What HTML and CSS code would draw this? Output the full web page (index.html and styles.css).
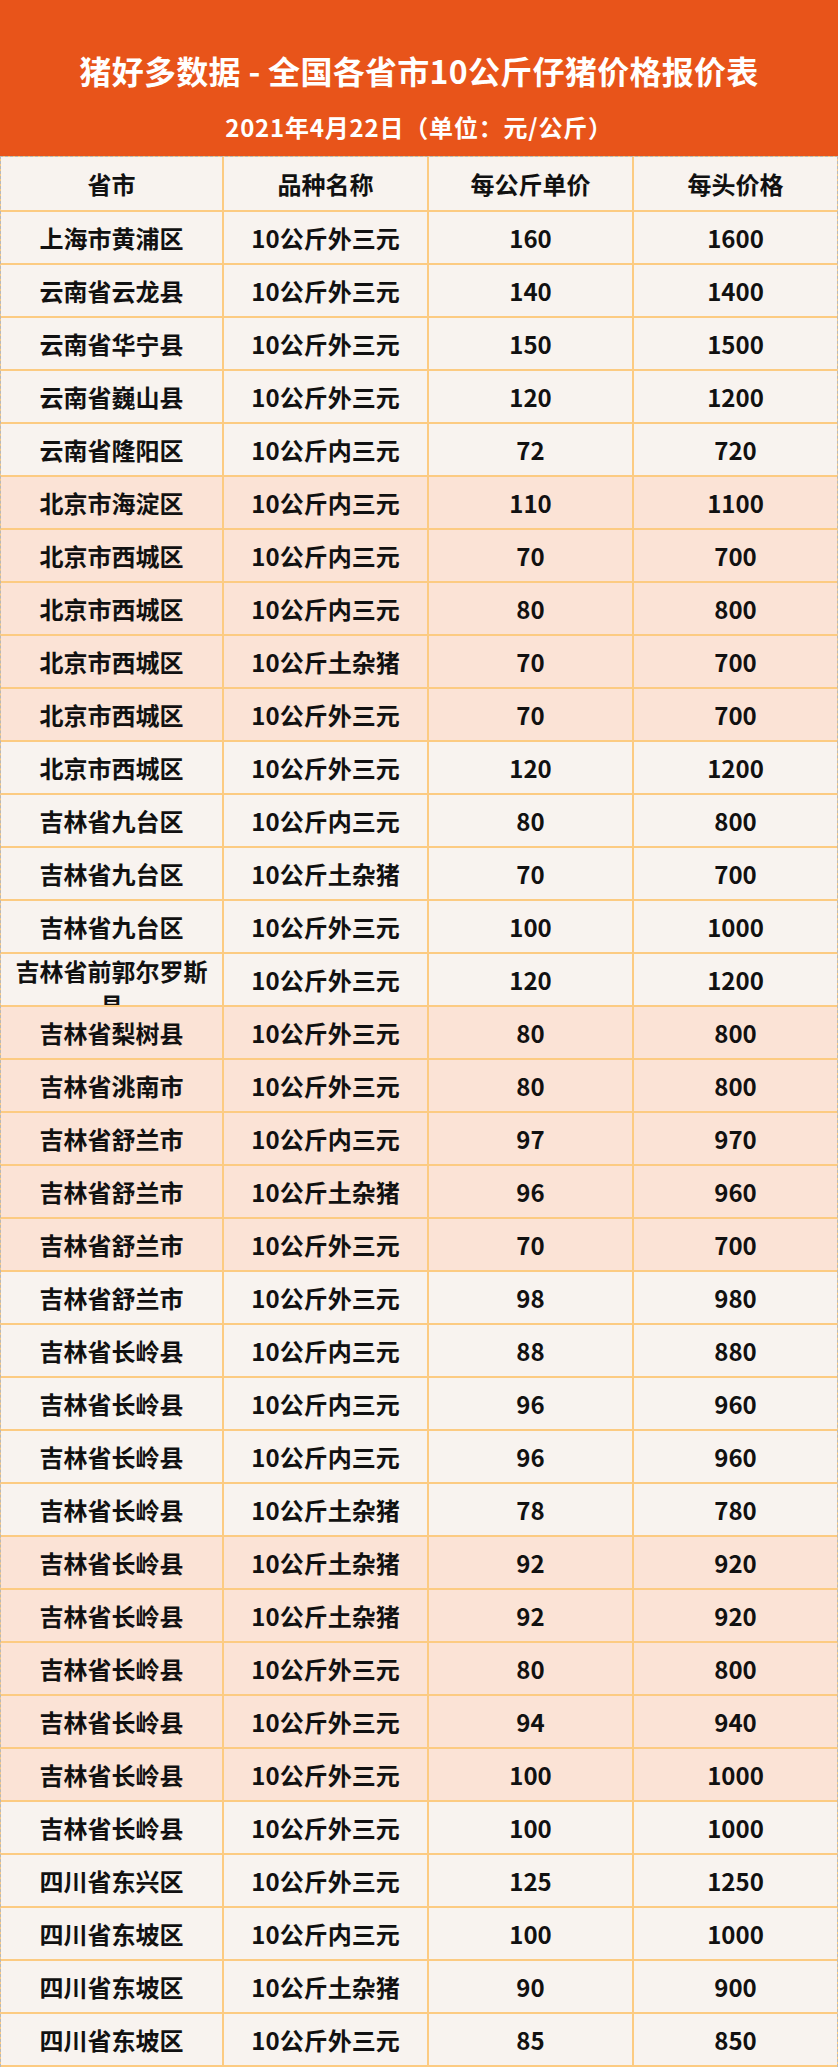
FILE: index.html
```html
<!DOCTYPE html>
<html lang="zh-CN">
<head>
<meta charset="utf-8">
<title>猪好多数据 - 全国各省市10公斤仔猪价格报价表</title>
<link rel="stylesheet" href="styles.css">
</head>
<body>
<div class="page">
  <header class="banner">
    <div class="title">猪好多数据 - 全国各省市10公斤仔猪价格报价表</div>
    <div class="date">2021年4月22日（单位：元/公斤）</div>
  </header>
  <div class="table">
    <div class="row head"><div>省市</div><div>品种名称</div><div>每公斤单价</div><div>每头价格</div></div>
    <div class="row light"><div>上海市黄浦区</div><div>10公斤外三元</div><div>160</div><div>1600</div></div>
    <div class="row light"><div>云南省云龙县</div><div>10公斤外三元</div><div>140</div><div>1400</div></div>
    <div class="row light"><div>云南省华宁县</div><div>10公斤外三元</div><div>150</div><div>1500</div></div>
    <div class="row light"><div>云南省巍山县</div><div>10公斤外三元</div><div>120</div><div>1200</div></div>
    <div class="row light"><div>云南省隆阳区</div><div>10公斤内三元</div><div>72</div><div>720</div></div>
    <div class="row pink"><div>北京市海淀区</div><div>10公斤内三元</div><div>110</div><div>1100</div></div>
    <div class="row pink"><div>北京市西城区</div><div>10公斤内三元</div><div>70</div><div>700</div></div>
    <div class="row pink"><div>北京市西城区</div><div>10公斤内三元</div><div>80</div><div>800</div></div>
    <div class="row pink"><div>北京市西城区</div><div>10公斤土杂猪</div><div>70</div><div>700</div></div>
    <div class="row pink"><div>北京市西城区</div><div>10公斤外三元</div><div>70</div><div>700</div></div>
    <div class="row light"><div>北京市西城区</div><div>10公斤外三元</div><div>120</div><div>1200</div></div>
    <div class="row light"><div>吉林省九台区</div><div>10公斤内三元</div><div>80</div><div>800</div></div>
    <div class="row light"><div>吉林省九台区</div><div>10公斤土杂猪</div><div>70</div><div>700</div></div>
    <div class="row light"><div>吉林省九台区</div><div>10公斤外三元</div><div>100</div><div>1000</div></div>
    <div class="row light"><div class="wrap">吉林省前郭尔罗斯县</div><div>10公斤外三元</div><div>120</div><div>1200</div></div>
    <div class="row pink"><div>吉林省梨树县</div><div>10公斤外三元</div><div>80</div><div>800</div></div>
    <div class="row pink"><div>吉林省洮南市</div><div>10公斤外三元</div><div>80</div><div>800</div></div>
    <div class="row pink"><div>吉林省舒兰市</div><div>10公斤内三元</div><div>97</div><div>970</div></div>
    <div class="row pink"><div>吉林省舒兰市</div><div>10公斤土杂猪</div><div>96</div><div>960</div></div>
    <div class="row pink"><div>吉林省舒兰市</div><div>10公斤外三元</div><div>70</div><div>700</div></div>
    <div class="row light"><div>吉林省舒兰市</div><div>10公斤外三元</div><div>98</div><div>980</div></div>
    <div class="row light"><div>吉林省长岭县</div><div>10公斤内三元</div><div>88</div><div>880</div></div>
    <div class="row light"><div>吉林省长岭县</div><div>10公斤内三元</div><div>96</div><div>960</div></div>
    <div class="row light"><div>吉林省长岭县</div><div>10公斤内三元</div><div>96</div><div>960</div></div>
    <div class="row light"><div>吉林省长岭县</div><div>10公斤土杂猪</div><div>78</div><div>780</div></div>
    <div class="row pink"><div>吉林省长岭县</div><div>10公斤土杂猪</div><div>92</div><div>920</div></div>
    <div class="row pink"><div>吉林省长岭县</div><div>10公斤土杂猪</div><div>92</div><div>920</div></div>
    <div class="row pink"><div>吉林省长岭县</div><div>10公斤外三元</div><div>80</div><div>800</div></div>
    <div class="row pink"><div>吉林省长岭县</div><div>10公斤外三元</div><div>94</div><div>940</div></div>
    <div class="row pink"><div>吉林省长岭县</div><div>10公斤外三元</div><div>100</div><div>1000</div></div>
    <div class="row light"><div>吉林省长岭县</div><div>10公斤外三元</div><div>100</div><div>1000</div></div>
    <div class="row light"><div>四川省东兴区</div><div>10公斤外三元</div><div>125</div><div>1250</div></div>
    <div class="row light"><div>四川省东坡区</div><div>10公斤内三元</div><div>100</div><div>1000</div></div>
    <div class="row light"><div>四川省东坡区</div><div>10公斤土杂猪</div><div>90</div><div>900</div></div>
    <div class="row light"><div>四川省东坡区</div><div>10公斤外三元</div><div>85</div><div>850</div></div>
  </div>
</div>
</body>
</html>
```

FILE: styles.css
```css
html, body {
  margin: 0;
  padding: 0;
  background: #ffffff;
}

body {
  font-family: "Noto Sans CJK SC", "Noto Sans", sans-serif;
  font-weight: 700;
  color: #111111;
}

.page {
  width: 838px;
}

.banner {
  box-sizing: border-box;
  height: 156px;
  padding-top: 50px;
  background: #e8541a;
  color: #ffffff;
  text-align: center;
}

.title {
  font-size: 32px;
  line-height: 40px;
  letter-spacing: 0.3px;
}

.date {
  margin-top: 22px;
  font-size: 24px;
  line-height: 30px;
  letter-spacing: 0.8px;
}

.table {
  box-sizing: border-box;
  width: 838px;
  display: flex;
  flex-direction: column;
  gap: 2px;
  padding-bottom: 2px;
  background: #fccb82;
  border-top: 1px dashed #b8b8b8;
  border-left: 1px dashed #b8b8b8;
  border-right: 1px dashed #b8b8b8;
}

.row {
  display: grid;
  grid-template-columns: 221px 203px 203px 203px;
  column-gap: 2px;
  height: 51px;
}

.row.head {
  height: 53px;
}

.row > div {
  display: flex;
  align-items: center;
  justify-content: center;
  box-sizing: border-box;
  padding: 0 4px;
  font-size: 24px;
  line-height: 30px;
  text-align: center;
  overflow: hidden;
}

.head > div,
.light > div {
  background: #f8f3ef;
}

.pink > div {
  background: #fbe3d6;
}

.row > div.wrap {
  align-items: flex-start;
  line-height: 34px;
}
```
